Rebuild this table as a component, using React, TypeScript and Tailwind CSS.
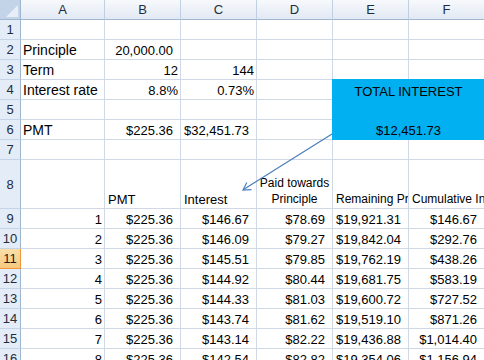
import React from 'react'

type Align = 'l' | 'L' | 'r' | 'm' | 'c' | 's'
type Cell = [string, Align] | null

const alignCls: Record<Align, string> = {
  l: 'justify-start pl-[3px] text-[13px]',
  s: 'justify-start pl-[3px] text-[12px]',
  L: 'justify-start pl-[2px] text-[14px]',
  r: 'justify-end pr-[2px] text-[13px]',
  m: 'justify-end pr-[7px] text-[13px]',
  c: 'justify-center text-[13px]',
}

const m = (s: string): Cell => [s, 'm']

// rows 1-7 (E4:F6 is one merged blue block, so rows 4-6 only have A-D)
const topRows: { n: number; cells: Cell[] }[] = [
  { n: 1, cells: [null, null, null, null, null, null] },
  { n: 2, cells: [['Principle', 'L'], m('20,000.00'), null, null, null, null] },
  { n: 3, cells: [['Term', 'L'], ['12', 'r'], ['144', 'r'], null, null, null] },
  { n: 4, cells: [['Interest rate', 'L'], ['8.8%', 'r'], ['0.73%', 'r'], null] },
  { n: 5, cells: [null, null, null, null] },
  { n: 6, cells: [['PMT', 'L'], m('$225.36'), m('$32,451.73'), null] },
  { n: 7, cells: [null, null, null, null, null, null] },
]

const schedule = [
  ['1', '$225.36', '$146.67', '$78.69', '$19,921.31', '$146.67'],
  ['2', '$225.36', '$146.09', '$79.27', '$19,842.04', '$292.76'],
  ['3', '$225.36', '$145.51', '$79.85', '$19,762.19', '$438.26'],
  ['4', '$225.36', '$144.92', '$80.44', '$19,681.75', '$583.19'],
  ['5', '$225.36', '$144.33', '$81.03', '$19,600.72', '$727.52'],
  ['6', '$225.36', '$143.74', '$81.62', '$19,519.10', '$871.26'],
  ['7', '$225.36', '$143.14', '$82.22', '$19,436.88', '$1,014.40'],
  ['8', '$225.36', '$142.54', '$82.82', '$19,354.06', '$1,156.94'],
]

function RowHead({ n }: { n: number }) {
  const active = n === 11
  return (
    <div
      className={`flex items-center justify-center border-r border-b text-[13px] leading-none ${
        active
          ? 'bg-gradient-to-b from-[#fadfa9] to-[#f6c97f] border-[#f29536] text-[#1f1f1f]'
          : 'bg-[#e4ecf7] border-r-[#9eb6ce] border-b-[#c5d3e6] text-[#1f2d3d]'
      }`}
    >
      {n}
    </div>
  )
}

function Td({ cell }: { cell: Cell }) {
  const a = cell ? alignCls[cell[1]] : ''
  return (
    <div className={`flex items-end overflow-hidden whitespace-nowrap border-r border-b border-[#d0d7e5] bg-white pb-px leading-[15px] text-black ${a}`}>
      {cell ? cell[0] : ''}
    </div>
  )
}

export default function App() {
  return (
    <div className="relative h-[360px] w-[484px] overflow-hidden bg-white font-['Liberation_Sans',Arial,sans-serif]">
      <div className="grid grid-cols-[21px_84px_76px_76px_76px_76px_76px] grid-rows-[repeat(8,20px)_49px_repeat(8,20px)]">
        {/* corner */}
        <div className="flex items-end justify-end border-r border-b border-[#9eb6ce] bg-[#c3d3e8] pr-[2px] pb-[2px]">
          <svg width="12" height="12" viewBox="0 0 12 12">
            <polygon points="12,0 12,12 0,12" fill="#e8eef7" />
          </svg>
        </div>
        {['A', 'B', 'C', 'D', 'E', 'F'].map((c) => (
          <div
            key={c}
            className="flex items-center justify-center border-r border-b border-r-[#c0cfe2] border-b-[#9eb6ce] bg-gradient-to-b from-[#f7f9fc] to-[#e2e9f3] text-[13px] leading-none text-[#1f2d3d]"
          >
            {c}
          </div>
        ))}

        {topRows.map((r) => (
          <React.Fragment key={r.n}>
            <RowHead n={r.n} />
            {r.cells.map((c, i) => (
              <Td key={i} cell={c} />
            ))}
          </React.Fragment>
        ))}

        {/* merged E4:F6 */}
        <div className="relative z-10 col-span-2 col-start-6 row-span-3 row-start-5 -mt-px -ml-px flex flex-col bg-[#00b0f0] text-[13px] leading-[15px] text-black">
          <div className="flex h-[21px] items-end justify-center pb-px">TOTAL INTEREST</div>
          <div className="h-[20px]" />
          <div className="flex h-[20px] items-end justify-center pb-[2px]">$12,451.73</div>
        </div>

        {/* row 8 headings */}
        <RowHead n={8} />
        <Td cell={null} />
        <Td cell={['PMT', 'l']} />
        <Td cell={['Interest', 'l']} />
        <div className="flex flex-col items-center justify-end overflow-hidden border-r border-b border-[#d0d7e5] bg-white pb-px text-[12px] leading-[16px] whitespace-nowrap text-black">
          <span>Paid towards</span>
          <span>Principle</span>
        </div>
        <Td cell={['Remaining Principle', 's']} />
        <Td cell={['Cumulative Interest', 's']} />

        {schedule.map((r, i) => (
          <React.Fragment key={i}>
            <RowHead n={9 + i} />
            <Td cell={[r[0], 'r']} />
            {r.slice(1).map((v, j) => (
              <Td key={j} cell={m(v)} />
            ))}
          </React.Fragment>
        ))}
      </div>

      {/* connector arrow from the total box */}
      <svg className="pointer-events-none absolute left-0 top-0 z-20" width="484" height="360">
        <line x1="332" y1="134" x2="243.5" y2="189.5" stroke="#4a7ebb" strokeWidth="1.2" />
        <polyline points="251.5,189.6 243,190 246.8,182.6" fill="none" stroke="#4a7ebb" strokeWidth="1.2" />
      </svg>
    </div>
  )
}
